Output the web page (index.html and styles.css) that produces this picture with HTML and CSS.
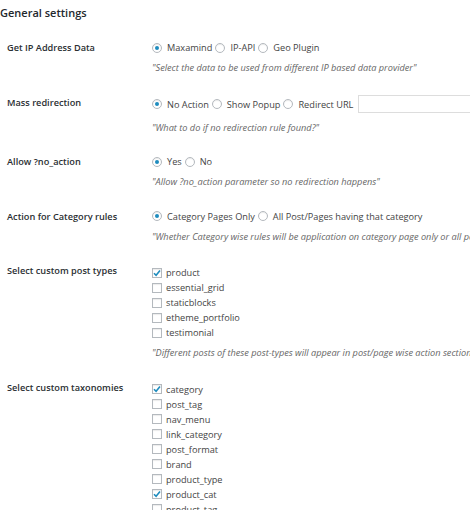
FILE: index.html
```html
<!DOCTYPE html>
<html>
<head>
<meta charset="utf-8">
<link rel="stylesheet" href="styles.css">
</head>
<body>
<h2 class="title">General settings</h2>
<div class="form">
  <div class="label">Get IP Address Data</div>
  <div class="field">
    <div class="choices">
      <span class="radio on"></span><span class="opt">Maxamind</span>
      <span class="radio"></span><span class="opt">IP-API</span>
      <span class="radio"></span><span class="opt">Geo Plugin</span>
    </div>
    <div class="desc">"Select the data to be used from different IP based data provider"</div>
  </div>

  <div class="label">Mass redirection</div>
  <div class="field">
    <div class="choices tall">
      <span class="radio on"></span><span class="opt">No Action</span>
      <span class="radio"></span><span class="opt">Show Popup</span>
      <span class="radio"></span><span class="opt">Redirect URL</span>
      <span class="textbox"></span>
    </div>
    <div class="desc after-tall">"What to do if no redirection rule found?"</div>
  </div>

  <div class="label">Allow ?no_action</div>
  <div class="field">
    <div class="choices">
      <span class="radio on"></span><span class="opt">Yes</span>
      <span class="radio"></span><span class="opt">No</span>
    </div>
    <div class="desc">"Allow ?no_action parameter so no redirection happens"</div>
  </div>

  <div class="label">Action for Category rules</div>
  <div class="field">
    <div class="choices">
      <span class="radio on"></span><span class="opt">Category Pages Only</span>
      <span class="radio"></span><span class="opt">All Post/Pages having that category</span>
    </div>
    <div class="desc">"Whether Category wise rules will be application on category page only or all posts/pages having that category"</div>
  </div>

  <div class="label">Select custom post types</div>
  <div class="field">
    <ul class="checks">
      <li><span class="box on"><svg viewBox="0 0 10 10"><path d="M2 5.2 L4.1 7.3 L8 2.6"/></svg></span>product</li>
      <li><span class="box"></span>essential_grid</li>
      <li><span class="box"></span>staticblocks</li>
      <li><span class="box"></span>etheme_portfolio</li>
      <li><span class="box"></span>testimonial</li>
    </ul>
    <div class="desc">"Different posts of these post-types will appear in post/page wise action section"</div>
  </div>

  <div class="label">Select custom taxonomies</div>
  <div class="field">
    <ul class="checks">
      <li><span class="box on"><svg viewBox="0 0 10 10"><path d="M2 5.2 L4.1 7.3 L8 2.6"/></svg></span>category</li>
      <li><span class="box"></span>post_tag</li>
      <li><span class="box"></span>nav_menu</li>
      <li><span class="box"></span>link_category</li>
      <li><span class="box"></span>post_format</li>
      <li><span class="box"></span>brand</li>
      <li><span class="box"></span>product_type</li>
      <li><span class="box on"><svg viewBox="0 0 10 10"><path d="M2 5.2 L4.1 7.3 L8 2.6"/></svg></span>product_cat</li>
      <li><span class="box"></span>product_tag</li>
    </ul>
  </div>
</div>
</body>
</html>
```

FILE: styles.css
```css
html, body {
  margin: 0;
  padding: 0;
  background: #fff;
  overflow: hidden;
}
body {
  width: 470px;
  height: 510px;
  font-family: "Open Sans", "Noto Sans", sans-serif;
  color: #444;
}
.title {
  margin: 5px 0 0 0;
  font-size: 11px;
  line-height: 16px;
  font-weight: 600;
  color: #23282d;
}
.form {
  display: grid;
  grid-template-columns: 152px 1fr;
  row-gap: 19.5px;
  margin-top: 19px;
}
.label {
  padding-left: 7px;
  font-size: 9.2px;
  line-height: 15px;
  font-weight: 600;
  color: #2b2f33;
  white-space: nowrap;
}
.field {
  min-width: 0;
  white-space: nowrap;
}
.choices {
  display: flex;
  align-items: center;
  height: 15px;
  font-size: 9.2px;
  color: #444;
}
.choices.tall {
  height: 19px;
}
.radio {
  box-sizing: border-box;
  width: 10px;
  height: 10px;
  border: 1px solid #b4b9be;
  border-radius: 50%;
  background: #fff;
  display: flex;
  align-items: center;
  justify-content: center;
  flex: none;
  box-shadow: inset 0 1px 1px rgba(0,0,0,0.08);
}
.radio.on::before {
  content: "";
  width: 4px;
  height: 4px;
  border-radius: 50%;
  background: #1e8cbe;
}
.opt {
  margin: 0 3px 0 5px;
}
.textbox {
  box-sizing: border-box;
  width: 140px;
  height: 18px;
  border: 1px solid #ddd;
  background: #fff;
  margin-left: 2px;
  flex: none;
}
.desc {
  margin-top: 5px;
  font-size: 9.2px;
  line-height: 15px;
  font-style: italic;
  color: #666;
}
.desc.after-tall {
  margin-top: 6px;
}
.checks {
  list-style: none;
  margin: 2px 0 0 0;
  padding: 0;
  font-size: 9.2px;
  color: #444;
}
.checks li {
  display: flex;
  align-items: center;
  height: 15px;
}
.box {
  box-sizing: border-box;
  width: 10px;
  height: 10px;
  border: 1px solid #b4b9be;
  background: #fff;
  margin-right: 4px;
  flex: none;
  display: flex;
  box-shadow: inset 0 1px 1px rgba(0,0,0,0.08);
}
.box svg {
  width: 10px;
  height: 10px;
  margin: -1px;
}
.box svg path {
  fill: none;
  stroke: #1e8cbe;
  stroke-width: 1.6;
}
```
